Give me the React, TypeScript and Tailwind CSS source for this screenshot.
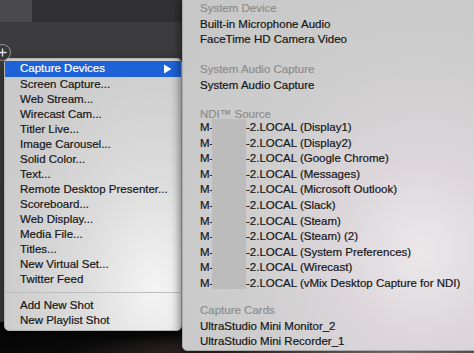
const font = { fontFamily: "'Liberation Sans', Arial, sans-serif" };

const leftItems = [
  "Screen Capture...",
  "Web Stream...",
  "Wirecast Cam...",
  "Titler Live...",
  "Image Carousel...",
  "Solid Color...",
  "Text...",
  "Remote Desktop Presenter...",
  "Scoreboard...",
  "Web Display...",
  "Media File...",
  "Titles...",
  "New Virtual Set...",
  "Twitter Feed",
];

const ndiSources = [
  "(Display1)",
  "(Display2)",
  "(Google Chrome)",
  "(Messages)",
  "(Microsoft Outlook)",
  "(Slack)",
  "(Steam)",
  "(Steam) (2)",
  "(System Preferences)",
  "(Wirecast)",
  "(vMix Desktop Capture for NDI)",
];

function Header({ children, h = "h-[15.5px] leading-[15.5px]" }: { children: React.ReactNode; h?: string }) {
  return <div className={`${h} whitespace-nowrap text-[#8d8d8d]`}>{children}</div>;
}

function Item({ children }: { children: React.ReactNode }) {
  return <div className="h-[15.5px] whitespace-nowrap leading-[15.5px] text-[#161616]">{children}</div>;
}

function LeftMenu() {
  return (
    <div className="absolute left-[4px] top-[58px] w-[178px] rounded-[5px] border border-[#b4b4b4] bg-[radial-gradient(ellipse_at_85%_85%,#f4f4f4_0%,#dcdcdc_35%,#cdcdcd_70%,#c8c8c8_100%)] pt-[2px] pb-[2px] shadow-[0_4px_12px_rgba(0,0,0,0.5)]">
      <div className="flex h-[16px] items-center justify-between bg-[#1d62d6] pl-[15px] pr-[9px] text-white">
        <span>Capture Devices</span>
        <svg width="9" height="10" viewBox="0 0 9 10">
          <path d="M1 0.5 L8.5 5 L1 9.5 Z" fill="white" />
        </svg>
      </div>
      {leftItems.map((t) => (
        <div key={t} className="h-[15px] whitespace-nowrap pl-[15px] leading-[15px] text-[#161616]">
          {t}
        </div>
      ))}
      <div className="my-[5px] h-px bg-[#bdbdbd]" />
      <div className="h-[15px] pl-[15px] leading-[15px] text-[#161616]">Add New Shot</div>
      <div className="h-[15px] pl-[15px] leading-[15px] text-[#161616]">New Playlist Shot</div>
    </div>
  );
}

function SubMenu() {
  return (
    <div className="absolute left-[182px] top-[-6px] h-[357px] w-[300px] rounded-[5px] border border-[#aaaaaa] bg-[radial-gradient(ellipse_at_80%_72%,#ece8ea_0%,#dcd6da_25%,#cdcdcd_55%,#c6c6c6_100%)] pl-[17px] pt-[6px] shadow-[-2px_2px_10px_rgba(0,0,0,0.5)]">
      <div className="relative">
        <Header>System Device</Header>
        <Item>Built-in Microphone Audio</Item>
        <Item>FaceTime HD Camera Video</Item>
        <div className="h-[14.75px]" />
        <Header>System Audio Capture</Header>
        <Item>System Audio Capture</Item>
        <div className="h-[14.75px]" />
        <Header h="h-[12px] leading-[12px]">NDI™ Source</Header>
        {ndiSources.map((s) => (
          <div key={s} className="flex h-[15.6px] whitespace-nowrap leading-[15.6px] text-[#161616]">
            <span className="w-[46px]">M-</span>
            <span>-2.LOCAL {s}</span>
          </div>
        ))}
        <div className="absolute left-[12px] top-[118px] h-[170px] w-[34px] bg-[#bcbcbc] blur-[0.5px]" />
        <div className="h-[11.7px]" />
        <Header>Capture Cards</Header>
        <Item>UltraStudio Mini Monitor_2</Item>
        <Item>UltraStudio Mini Recorder_1</Item>
      </div>
    </div>
  );
}

export default function App() {
  return (
    <div
      className="relative h-[353px] w-[474px] overflow-hidden text-[11.5px] antialiased [-webkit-text-stroke:0.2px_currentColor]"
      style={font}
    >
      <div className="flex h-[22px]">
        <div className="w-[32px] bg-[#4a4a4c]" />
        <div className="flex-1 bg-[#313133]" />
      </div>
      <div className="h-[300px] bg-[#3c3c3e]" />
      <div className="h-[31px] bg-[radial-gradient(ellipse_at_85%_100%,#9a9a9a_0%,#3a2a2c_30%,#0a0a0a_60%,#050505_100%)]" />
      <div className="absolute left-[-6px] top-[44px] flex h-[17px] w-[17px] items-center justify-center rounded-full border border-[#9c9c9c] bg-[#3a3a3c]">
        <svg width="9" height="9" viewBox="0 0 9 9">
          <path d="M4.5 0.5 V8.5 M0.5 4.5 H8.5" stroke="#e8e8e8" strokeWidth="1.3" />
        </svg>
      </div>
      <LeftMenu />
      <SubMenu />
    </div>
  );
}
